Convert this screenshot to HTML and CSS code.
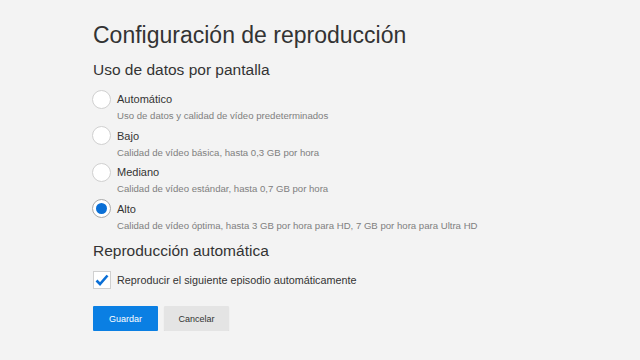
FILE: index.html
```html
<!DOCTYPE html>
<html lang="es">
<head>
  <meta charset="UTF-8" />
  <meta name="viewport" content="width=device-width, initial-scale=1.0" />
  <title>Configuración de reproducción</title>
  <link rel="stylesheet" href="styles.css">
</head>
<body>
  <main class="settings">
    <h1>Configuración de reproducción</h1>

    <h2>Uso de datos por pantalla</h2>
    <ul class="options">
      <li class="option">
        <div class="option-row"><span class="radio"></span><span class="label">Automático</span></div>
        <p class="hint">Uso de datos y calidad de vídeo predeterminados</p>
      </li>
      <li class="option">
        <div class="option-row"><span class="radio"></span><span class="label">Bajo</span></div>
        <p class="hint">Calidad de vídeo básica, hasta 0,3 GB por hora</p>
      </li>
      <li class="option">
        <div class="option-row"><span class="radio"></span><span class="label">Mediano</span></div>
        <p class="hint">Calidad de vídeo estándar, hasta 0,7 GB por hora</p>
      </li>
      <li class="option">
        <div class="option-row"><span class="radio checked"></span><span class="label">Alto</span></div>
        <p class="hint">Calidad de vídeo óptima, hasta 3 GB por hora para HD, 7 GB por hora para Ultra HD</p>
      </li>
    </ul>

    <h2 class="autoplay-title">Reproducción automática</h2>
    <div class="check-row">
      <span class="checkbox">
        <svg width="14" height="12" viewBox="0 0 14 12"><path d="M1.5 6.5 L5 10 L12.5 1.5" fill="none" stroke="#0a6fd6" stroke-width="2.6"/></svg>
      </span>
      <span class="label">Reproducir el siguiente episodio automáticamente</span>
    </div>

    <div class="actions">
      <button class="btn btn-primary">Guardar</button>
      <button class="btn btn-secondary">Cancelar</button>
    </div>
  </main>
</body>
</html>
```

FILE: styles.css
```css
body {
  margin: 0;
  background-color: #f3f3f3;
  font-family: "Liberation Sans", Arial, sans-serif;
  color: #333;
}

.settings {
  padding: 21px 0 0 93px;
  display: flex;
  flex-direction: column;
  align-items: flex-start;
}

h1 {
  margin: 0;
  font-size: 23px;
  line-height: 28px;
  font-weight: normal;
  color: #333;
}

h2 {
  margin: 11px 0 0;
  font-size: 15.5px;
  line-height: 20px;
  font-weight: normal;
  color: #333;
}

.options {
  list-style: none;
  margin: 10px 0 0;
  padding: 0;
}

.option {
  height: 36.5px;
}

.option-row {
  display: flex;
  align-items: center;
  height: 18px;
  margin-left: -1px;
}

.radio {
  width: 17px;
  height: 17px;
  border: 1px solid #d0d0d0;
  border-radius: 50%;
  background-color: #fff;
  margin-right: 6px;
  box-sizing: content-box;
  position: relative;
}

.radio.checked {
  border-color: #a9a9a9;
}

.radio.checked::after {
  content: "";
  position: absolute;
  left: 3px;
  top: 3px;
  width: 11px;
  height: 11px;
  border-radius: 50%;
  background-color: #0a6fd6;
}

.label {
  font-size: 11px;
  color: #333;
}

.hint {
  margin: 2px 0 0 24px;
  font-size: 9.6px;
  line-height: 12px;
  color: #808080;
}

.autoplay-title {
  margin-top: 5px;
}

.check-row {
  display: flex;
  align-items: center;
  margin-top: 10px;
}

.check-row .label {
  font-size: 10.8px;
}

.checkbox {
  width: 16px;
  height: 16px;
  border: 1px solid #d0d0d0;
  background-color: #fff;
  margin-right: 6px;
  display: flex;
  align-items: center;
  justify-content: center;
}

.actions {
  display: flex;
  gap: 6px;
  margin-top: 17px;
}

.btn {
  width: 65px;
  height: 25px;
  border: none;
  border-radius: 1px;
  font-family: "Liberation Sans", Arial, sans-serif;
  font-size: 9px;
  cursor: pointer;
}

.btn-primary {
  background-color: #0a7fe3;
  color: #fff;
}

.btn-secondary {
  background-color: #e4e4e4;
  color: #333;
  box-shadow: 0 1px 1px rgba(0, 0, 0, 0.15);
}
```
